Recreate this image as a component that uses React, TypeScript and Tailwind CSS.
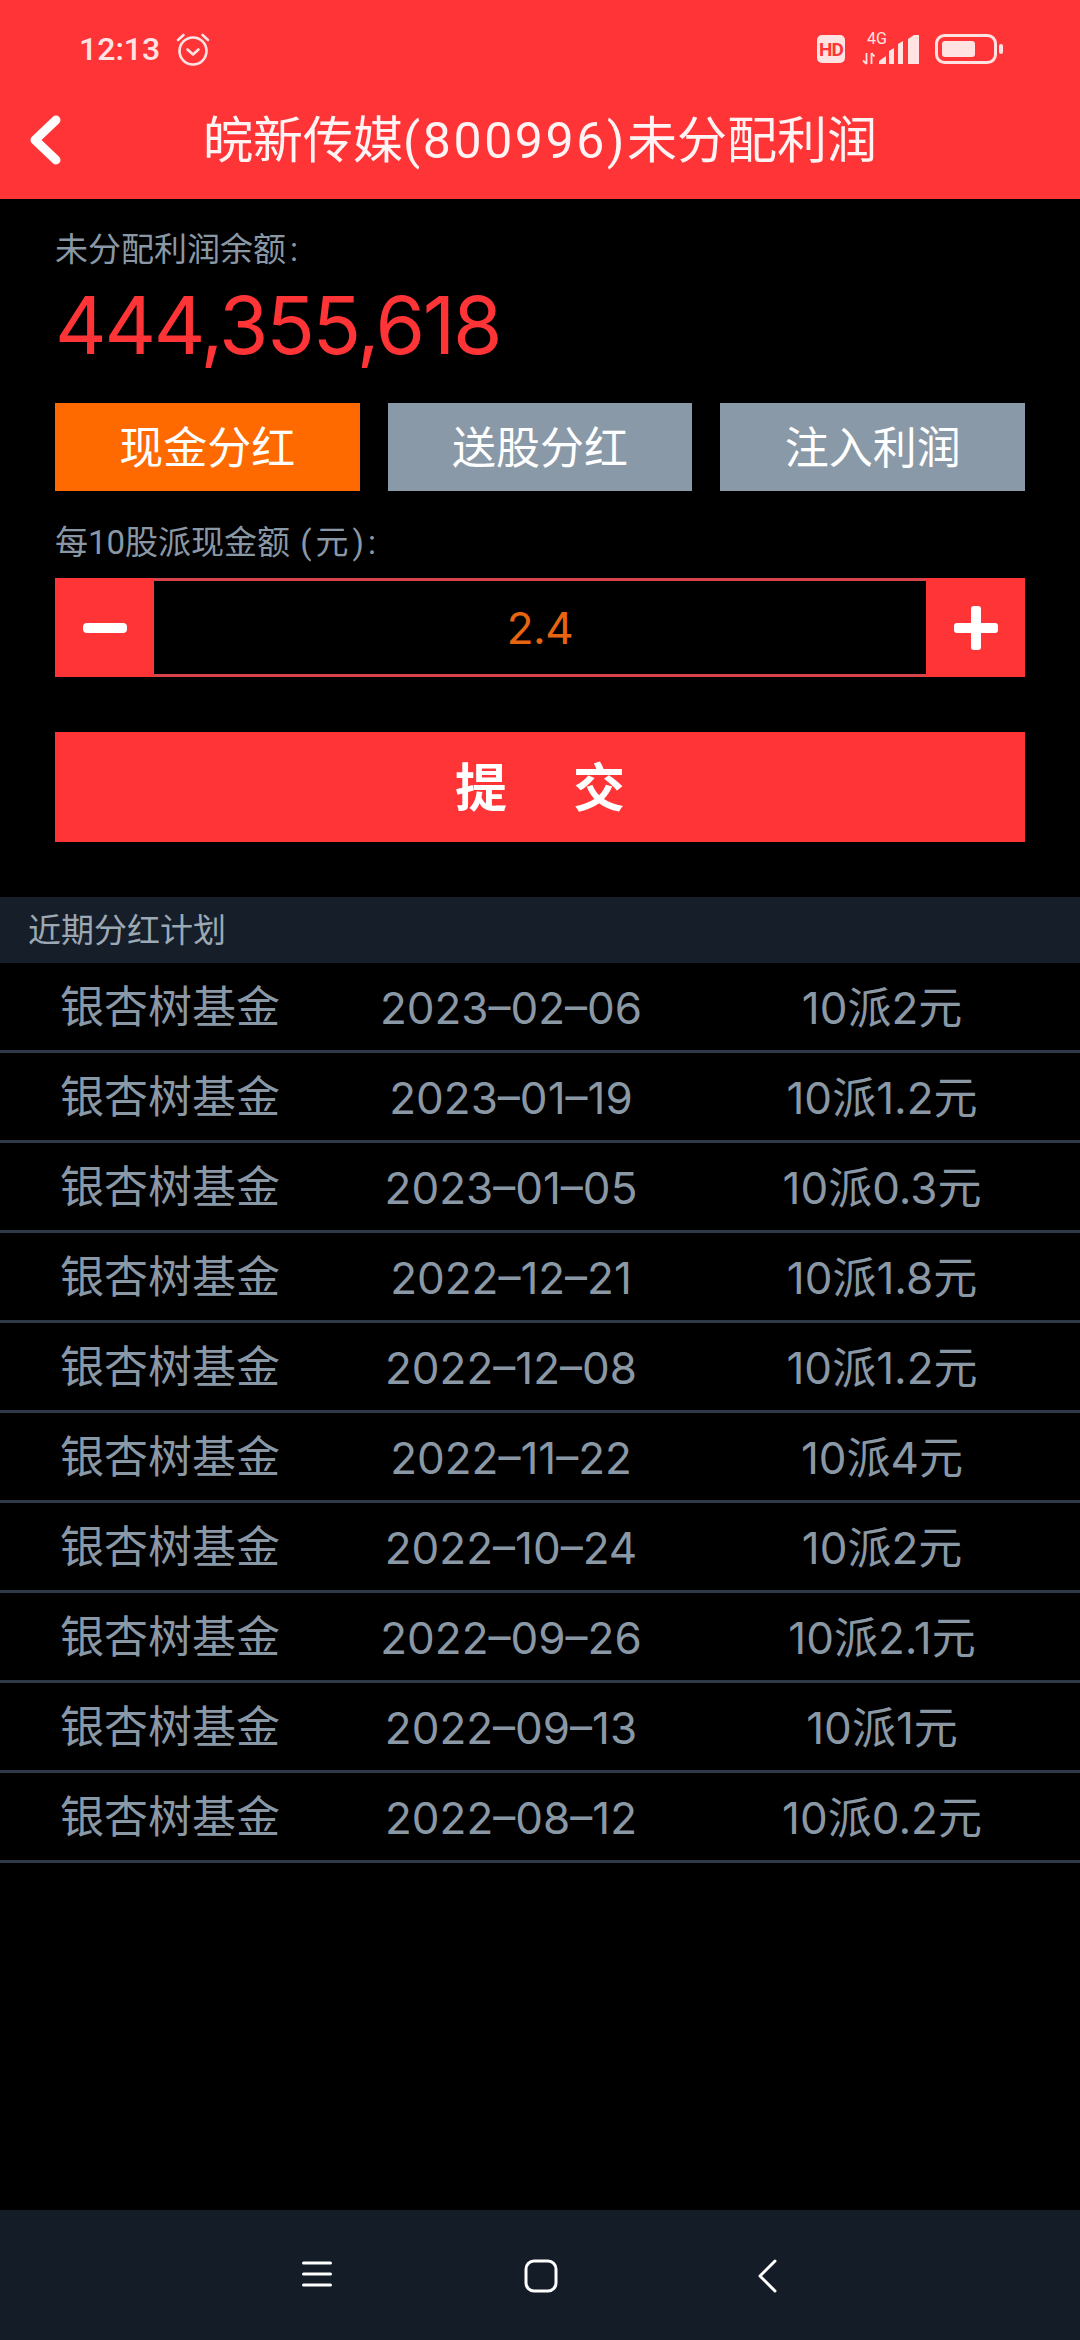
const rows = [
  ['2023–02–06', '10派2元'],
  ['2023–01–19', '10派1.2元'],
  ['2023–01–05', '10派0.3元'],
  ['2022–12–21', '10派1.8元'],
  ['2022–12–08', '10派1.2元'],
  ['2022–11–22', '10派4元'],
  ['2022–10–24', '10派2元'],
  ['2022–09–26', '10派2.1元'],
  ['2022–09–13', '10派1元'],
  ['2022–08–12', '10派0.2元'],
];

function Mixed({ text }: { text: string }) {
  return (
    <>
      {text.split(/([0-9.–]+)/).map((part, i) =>
        i % 2 === 1 ? (
          <span key={i} className="font-['Inter',sans-serif] font-normal">{part}</span>
        ) : (
          <span key={i}>{part}</span>
        ),
      )}
    </>
  );
}

function StatusBar() {
  return (
    <div className="h-[98px] flex items-center justify-between pl-[79px] pr-[77px] text-[#ffe3e3]">
      <div className="flex items-center gap-[16px]">
        <span className="text-[32px] leading-[36px] font-medium">12:13</span>
        <svg width="34" height="34" viewBox="0 0 34 34" fill="none" stroke="currentColor" strokeWidth="2.6" strokeLinecap="round" strokeLinejoin="round">
          <circle cx="17" cy="19" r="13.5" />
          <path d="M11.5 17.5l5.5 5 5.5-5" />
          <path d="M2 8l5.5-5M32 8l-5.5-5" />
        </svg>
      </div>
      <div className="flex items-center">
        <div className="w-[28px] h-[28px] rounded-[5px] bg-[#ffe3e3] flex items-center justify-center text-[#ff3437] text-[19px] leading-none font-bold tracking-[-1px]">HD</div>
        <div className="relative ml-[17px] w-[58px] h-[32px]">
          <span className="absolute left-[5px] -top-[2px] text-[16px] leading-[16px] font-normal">4G</span>
          <svg className="absolute left-0 top-0" width="58" height="32" viewBox="0 0 58 32" fill="currentColor">
            <path d="M4.5 20v11M1 27.5l3.5 3.5M9.5 31V20M9.5 20l3 3.5" fill="none" stroke="currentColor" strokeWidth="1.8" />
            <path d="M17 31v-3l7-5v8zM27 31V18l5-3v16zM36 31V11l5-3v23zM46 31V6l6-4h5v29z" />
          </svg>
        </div>
        <svg className="ml-[15px]" width="68" height="30" viewBox="0 0 68 30" fill="currentColor">
          <rect x="1.5" y="1.5" width="59" height="27" rx="8" fill="none" stroke="currentColor" strokeWidth="3" />
          <rect x="7" y="7" width="33" height="16" rx="3" />
          <rect x="64" y="10" width="4" height="10" rx="2" />
        </svg>
      </div>
    </div>
  );
}

function Stepper() {
  return (
    <div className="mt-[15px] flex h-[99px]">
      <div className="w-[99px] bg-[#ff3437] flex items-center justify-center">
        <svg width="44" height="10" viewBox="0 0 44 10"><rect width="44" height="10" rx="4" fill="#fff" /></svg>
      </div>
      <div className="flex-1 border-y-[3px] border-[#d8444a] flex items-center justify-center text-[#e8650f] text-[44px] leading-none font-['Inter',sans-serif] font-normal tracking-[-0.5px]">2.4</div>
      <div className="w-[99px] bg-[#ff3437] flex items-center justify-center">
        <svg width="44" height="44" viewBox="0 0 44 44" fill="#fff"><rect y="17" width="44" height="10" rx="3" /><rect x="17" width="10" height="44" rx="3" /></svg>
      </div>
    </div>
  );
}

function Row({ date, plan }: { date: string; plan: string }) {
  return (
    <div className="h-[90px] pt-[3px] border-b-[3px] border-[#2f3947] grid grid-cols-[340px_342px_1fr] items-center text-center text-[44px] leading-[60px] text-[#8a98a6]">
      <span className="-mt-[1px]">银杏树基金</span>
      <span><Mixed text={date} /></span>
      <span className="pl-[2px]"><Mixed text={plan} /></span>
    </div>
  );
}

export default function App() {
  return (
    <div className="w-[1080px] h-[2340px] bg-black flex flex-col font-['Roboto','Noto_Sans_CJK_SC',sans-serif]">
      <header className="h-[199px] bg-[#ff3437] text-white">
        <StatusBar />
        <div className="h-[84px] grid grid-cols-[100px_1fr_100px] items-center">
          <svg className="ml-[29px]" width="34" height="50" viewBox="0 0 34 50" fill="none" stroke="#fff" strokeWidth="9" strokeLinecap="round" strokeLinejoin="round">
            <path d="M27 5L6 25l21 20" />
          </svg>
          <h1 className="pt-[2px] text-center text-[50px] leading-[60px] font-normal text-[#fff3f3] whitespace-nowrap">
            皖新传媒<span className="tracking-[2.6px]">(800996)</span>未分配利润
          </h1>
        </div>
      </header>

      <main className="flex-1">
        <div className="px-[55px]">
          <p className="mt-[31px] text-[33px] leading-[40px] text-[#8a98a6]">未分配利润余额<span className="ml-[4px]">:</span></p>
          <p className="mt-[15px] text-[80px] leading-[80px] text-[#ff3437] font-['Inter',sans-serif] font-normal tracking-[-2.3px]">444,355,618</p>
          <div className="mt-[38px] grid grid-cols-3 gap-[28px] h-[88px] text-[44px] text-white">
            <div className="bg-[#ff6a00] pt-[4px] flex items-center justify-center">现金分红</div>
            <div className="bg-[#8a99a8] pt-[4px] flex items-center justify-center">送股分红</div>
            <div className="bg-[#8a99a8] pt-[4px] flex items-center justify-center">注入利润</div>
          </div>
          <p className="mt-[32px] text-[33px] leading-[40px] text-[#8a98a6]">每10股派现金额 <span className="ml-[2px] tracking-[4px]">(元):</span></p>
          <Stepper />
          <div className="mt-[55px] h-[110px] pt-[6px] bg-[#ff3437] flex items-center justify-center gap-[66px] text-[52px] font-bold text-white">
            <span>提</span>
            <span>交</span>
          </div>
        </div>

        <section className="mt-[55px]">
          <div className="h-[66px] pt-[2px] bg-[#161e29] pl-[28px] flex items-center text-[33px] text-[#9ca8b3]">近期分红计划</div>
          {rows.map(([date, plan], i) => (
            <Row key={i} date={date} plan={plan} />
          ))}
        </section>
      </main>

      <footer className="h-[130px] bg-[#131c27] relative">
        <div className="h-full flex items-start pt-[49px] pl-[302px]">
          <svg className="mt-[2px]" width="30" height="26" viewBox="0 0 30 26" fill="none" stroke="#fff" strokeWidth="3" strokeLinecap="round">
            <path d="M1.5 2h27M1.5 13h27M1.5 24h27" />
          </svg>
          <svg className="ml-[192px]" width="34" height="34" viewBox="0 0 34 34" fill="none" stroke="#fff" strokeWidth="3">
            <rect x="2" y="2" width="30" height="30" rx="8" />
          </svg>
          <svg className="ml-[200px]" width="20" height="34" viewBox="0 0 20 34" fill="none" stroke="#fff" strokeWidth="3" strokeLinecap="round" strokeLinejoin="round">
            <path d="M17 2L2 17l15 15" />
          </svg>
        </div>
      </footer>
    </div>
  );
}
